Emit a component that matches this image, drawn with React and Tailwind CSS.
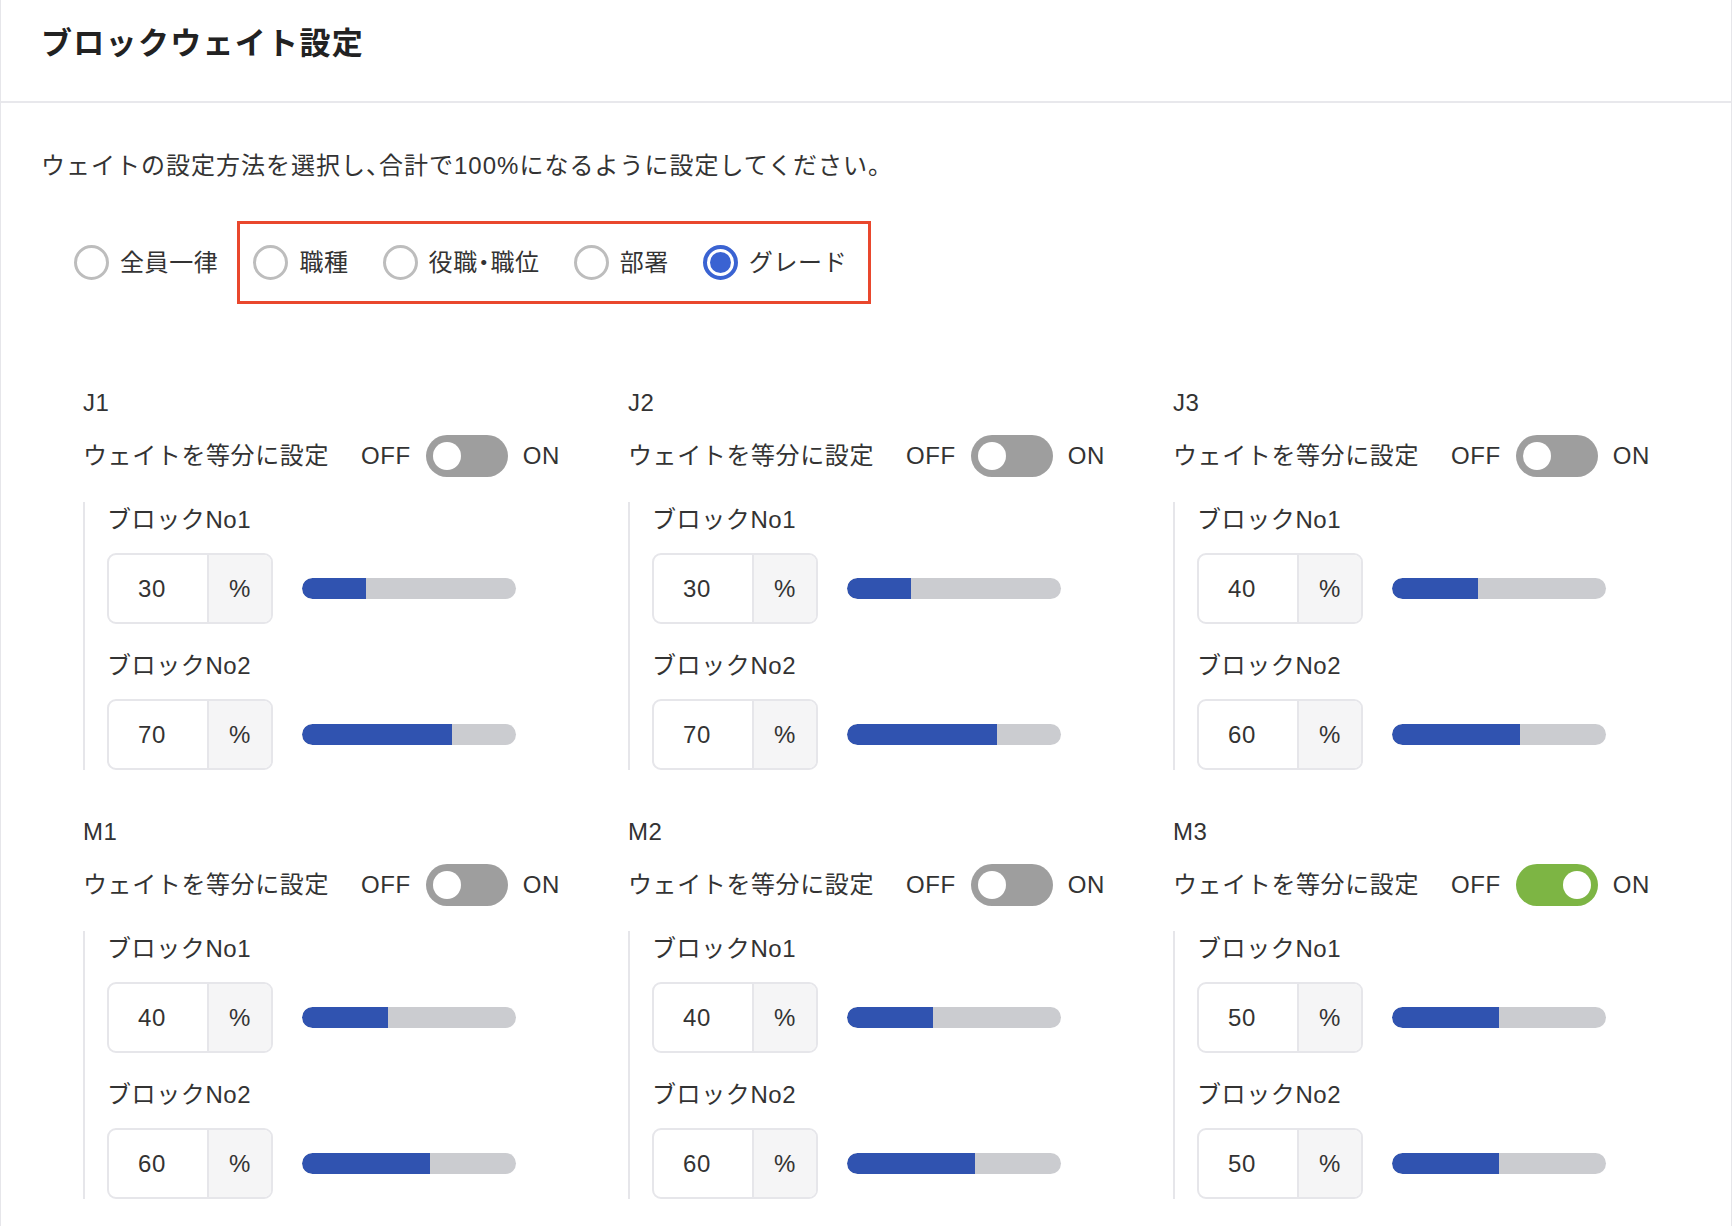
import React, { useState } from "react";

const FONT = { fontFamily: '"Liberation Sans", "Noto Sans CJK JP", sans-serif' };

const methods = ["全員一律", "職種", "役職・職位", "部署", "グレード"];

const groups = [
  { name: "J1", equal: false, blocks: [30, 70] },
  { name: "J2", equal: false, blocks: [30, 70] },
  { name: "J3", equal: false, blocks: [40, 60] },
  { name: "M1", equal: false, blocks: [40, 60] },
  { name: "M2", equal: false, blocks: [40, 60] },
  { name: "M3", equal: true, blocks: [50, 50] },
];

// narrow punctuation like the reference (・ and 、 take half width)
const Half = ({ children }) => (
  <span className="[font-feature-settings:'halt']">{children}</span>
);

const withHalf = (text) =>
  text.split(/([・、])/).map((part, i) =>
    part === "・" || part === "、" ? <Half key={i}>{part}</Half> : part
  );

const Radio = ({ label, checked, onClick }) => (
  <button onClick={onClick} className="flex items-center gap-[11px] shrink-0">
    {checked ? (
      <span className="w-[35px] h-[35px] rounded-full border-[4px] border-[#3a63d2] flex items-center justify-center">
        <span className="w-[21px] h-[21px] rounded-full bg-[#3a63d2]" />
      </span>
    ) : (
      <span className="w-[35px] h-[35px] rounded-full border-[3px] border-[#bdbdbd]" />
    )}
    <span className="text-[24px] leading-[30px] text-[#333]">{withHalf(label)}</span>
  </button>
);

const Toggle = ({ on }) => (
  <div
    className={`w-[82px] h-[42px] rounded-full flex items-center px-[7px] ${
      on ? "bg-[#7db544] justify-end" : "bg-[#9e9e9e] justify-start"
    }`}
  >
    <div className="w-[28px] h-[28px] rounded-full bg-white" />
  </div>
);

const BlockRow = ({ no, value }) => (
  <div>
    <p className="text-[24px] leading-[30px] text-[#333]">ブロックNo{no}</p>
    <div className="mt-[18px] flex items-center">
      <div className="w-[166px] h-[71px] rounded-[9px] border-2 border-[#e6e6ea] flex overflow-hidden">
        <div className="w-[98px] flex items-center justify-center text-[24px] text-[#333] pr-[12px]">
          {value}
        </div>
        <div className="flex-1 border-l-2 border-[#e6e6ea] bg-[#f5f5f6] flex items-center justify-center text-[24px] text-[#333]">
          %
        </div>
      </div>
      <div className="ml-[29px] w-[214px] h-[21px] rounded-full bg-[#cbccd0] overflow-hidden">
        <div className="h-full bg-[#3053b0] rounded-l-full" style={{ width: `${value}%` }} />
      </div>
    </div>
  </div>
);

const Group = ({ group }) => (
  <div>
    <p className="text-[24px] leading-[30px] text-[#333]">{group.name}</p>
    <div className="mt-[17px] flex items-center text-[24px] text-[#333]">
      <span>ウェイトを等分に設定</span>
      <span className="ml-[32px]">OFF</span>
      <div className="ml-[15px]">
        <Toggle on={group.equal} />
      </div>
      <span className="ml-[15px]">ON</span>
    </div>
    <div className="mt-[25px] border-l-2 border-[#e6e6ea] pl-[22px] pt-[3px]">
      <BlockRow no={1} value={group.blocks[0]} />
      <div className="mt-[27px]">
        <BlockRow no={2} value={group.blocks[1]} />
      </div>
    </div>
  </div>
);

export default function App() {
  const [method, setMethod] = useState(4);

  return (
    <div
      className="min-h-screen bg-white border-x border-[#e6e6ea] tracking-[0.6px]"
      style={FONT}
    >
      {/* Header */}
      <div className="h-[103px] border-b-2 border-[#e8e8ec] pl-[40px] pt-[24px]">
        <h1 className="text-[31px] leading-[40px] font-bold text-[#222] tracking-[1.3px]">
          ブロックウェイト設定
        </h1>
      </div>

      <div className="px-[40px] pt-[45px] pb-[28px]">
        <p className="text-[24px] leading-[36px] text-[#333] tracking-[1px]">
          {withHalf("ウェイトの設定方法を選択し、合計で100%になるように設定してください。")}
        </p>

        {/* Method radios */}
        <div className="mt-[37px] flex items-center pl-[33px]">
          <Radio label={methods[0]} checked={method === 0} onClick={() => setMethod(0)} />
          <div className="ml-[19px] h-[83px] border-[3px] border-[#e9472d] flex items-center gap-[34px] pl-[13px] pr-[21px]">
            {methods.slice(1).map((m, i) => (
              <Radio key={m} label={m} checked={method === i + 1} onClick={() => setMethod(i + 1)} />
            ))}
          </div>
        </div>

        {/* Groups */}
        <div className="mt-[84px] ml-[42px] grid grid-cols-[545px_545px_545px] gap-y-[47px]">
          {groups.map((g) => (
            <Group key={g.name} group={g} />
          ))}
        </div>
      </div>
    </div>
  );
}
